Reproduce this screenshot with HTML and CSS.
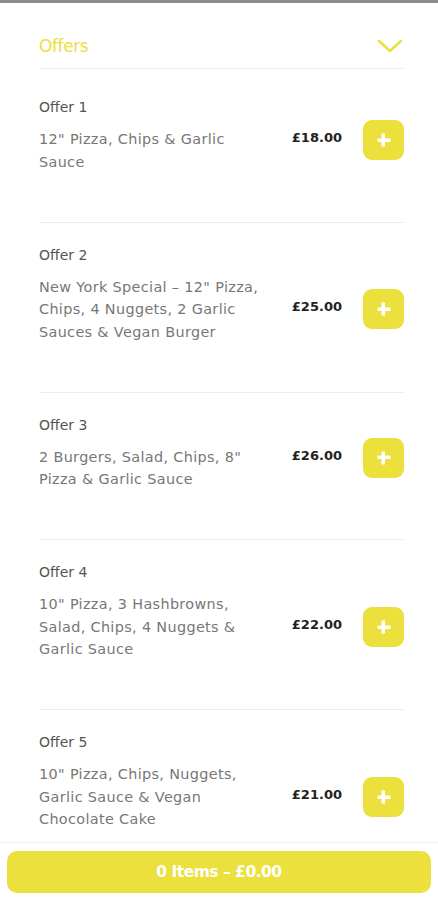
FILE: index.html
```html
<!DOCTYPE html>
<html lang="en">
<head>
<meta charset="utf-8">
<title>Offers</title>
<link rel="stylesheet" href="styles.css">
</head>
<body>
<div class="topline"></div>
<main class="menu">
  <div class="section-head">
    <span class="section-title">Offers</span>
    <svg class="chevron" width="26" height="16" viewBox="0 0 26 16"><path d="M2 3 L13 13 L24 3" fill="none" stroke="#ebe03c" stroke-width="2.6" stroke-linecap="round" stroke-linejoin="round"/></svg>
  </div>

  <div class="item item--first">
    <div class="item-name">Offer 1</div>
    <div class="item-row item-row--short">
      <p class="item-desc">12" Pizza, Chips &amp; Garlic Sauce</p>
      <div class="item-buy"><span class="price">£18.00</span><button class="add" aria-label="Add"><span class="plus"></span></button></div>
    </div>
  </div>

  <div class="item">
    <div class="item-name">Offer 2</div>
    <div class="item-row">
      <p class="item-desc">New York Special – 12" Pizza, Chips, 4 Nuggets, 2 Garlic Sauces &amp; Vegan Burger</p>
      <div class="item-buy"><span class="price">£25.00</span><button class="add" aria-label="Add"><span class="plus"></span></button></div>
    </div>
  </div>

  <div class="item">
    <div class="item-name">Offer 3</div>
    <div class="item-row item-row--short">
      <p class="item-desc">2 Burgers, Salad, Chips, 8" Pizza &amp; Garlic Sauce</p>
      <div class="item-buy"><span class="price">£26.00</span><button class="add" aria-label="Add"><span class="plus"></span></button></div>
    </div>
  </div>

  <div class="item">
    <div class="item-name">Offer 4</div>
    <div class="item-row">
      <p class="item-desc">10" Pizza, 3 Hashbrowns, Salad, Chips, 4 Nuggets &amp; Garlic Sauce</p>
      <div class="item-buy"><span class="price">£22.00</span><button class="add" aria-label="Add"><span class="plus"></span></button></div>
    </div>
  </div>

  <div class="item">
    <div class="item-name">Offer 5</div>
    <div class="item-row">
      <p class="item-desc">10" Pizza, Chips, Nuggets, Garlic Sauce &amp; Vegan Chocolate Cake</p>
      <div class="item-buy"><span class="price">£21.00</span><button class="add" aria-label="Add"><span class="plus"></span></button></div>
    </div>
  </div>
</main>
<div class="basket-bar">
  <button class="basket">0 Items – £0.00</button>
</div>
</body>
</html>
```
FILE: styles.css
```css
* { box-sizing: border-box; }
html, body { margin: 0; padding: 0; background: #fff; }
body {
  font-family: "DejaVu Sans", "Noto Sans", sans-serif;
  color: #555;
}
.topline { height: 3px; background: #8c8c8c; }
.menu { padding: 0 34px 120px 39px; }
.section-head {
  display: flex;
  align-items: center;
  justify-content: space-between;
  height: 66px;
  padding-top: 20px;
  border-bottom: 1px solid #eeeeee;
}
.section-title {
  font-size: 17px;
  font-weight: 500;
  color: #ebe03c;
  letter-spacing: -0.4px;
}
.chevron { margin-right: 1px; }
.item {
  padding: 21px 0 48.5px;
  border-bottom: 1px solid #eeeeee;
}
.item--first { padding-top: 27px; }
.item-name {
  font-size: 14px;
  line-height: 22px;
  color: #555;
}
.item-row {
  display: flex;
  align-items: center;
  justify-content: space-between;
  margin-top: 10px;
}
.item-row--short { align-items: flex-start; }
.item-row--short .item-buy { margin-top: -8px; }
.item-desc {
  width: 226px;
  margin: 0;
  font-size: 14.4px;
  line-height: 22.5px;
  letter-spacing: 0.35px;
  color: #777;
}
.item-buy {
  display: flex;
  align-items: center;
  gap: 21px;
}
.price {
  font-size: 13px;
  font-weight: bold;
  color: #222;
  margin-top: -5px;
}
.add {
  width: 41px;
  height: 40px;
  border: 0;
  border-radius: 9px;
  background: #ebe03c;
  position: relative;
  padding: 0;
}
.plus {
  position: absolute;
  left: 50%;
  top: 50%;
  width: 13px;
  height: 13px;
  transform: translate(-50%, -50%);
  background:
    linear-gradient(#fff, #fff) center / 13px 3.5px no-repeat,
    linear-gradient(#fff, #fff) center / 3.5px 13px no-repeat;
}
.basket-bar {
  position: fixed;
  left: 0;
  right: 0;
  bottom: 0;
  height: 58px;
  background: #fff;
  border-top: 1px solid #f0f0f0;
  padding: 8px 7px 7px;
}
.basket {
  display: block;
  width: 100%;
  height: 42px;
  border: 0;
  border-radius: 10px;
  background: #ebe03c;
  color: #fff;
  font-family: "DejaVu Sans", sans-serif;
  font-size: 15.5px;
  font-weight: bold;
  letter-spacing: -0.5px;
}
```
